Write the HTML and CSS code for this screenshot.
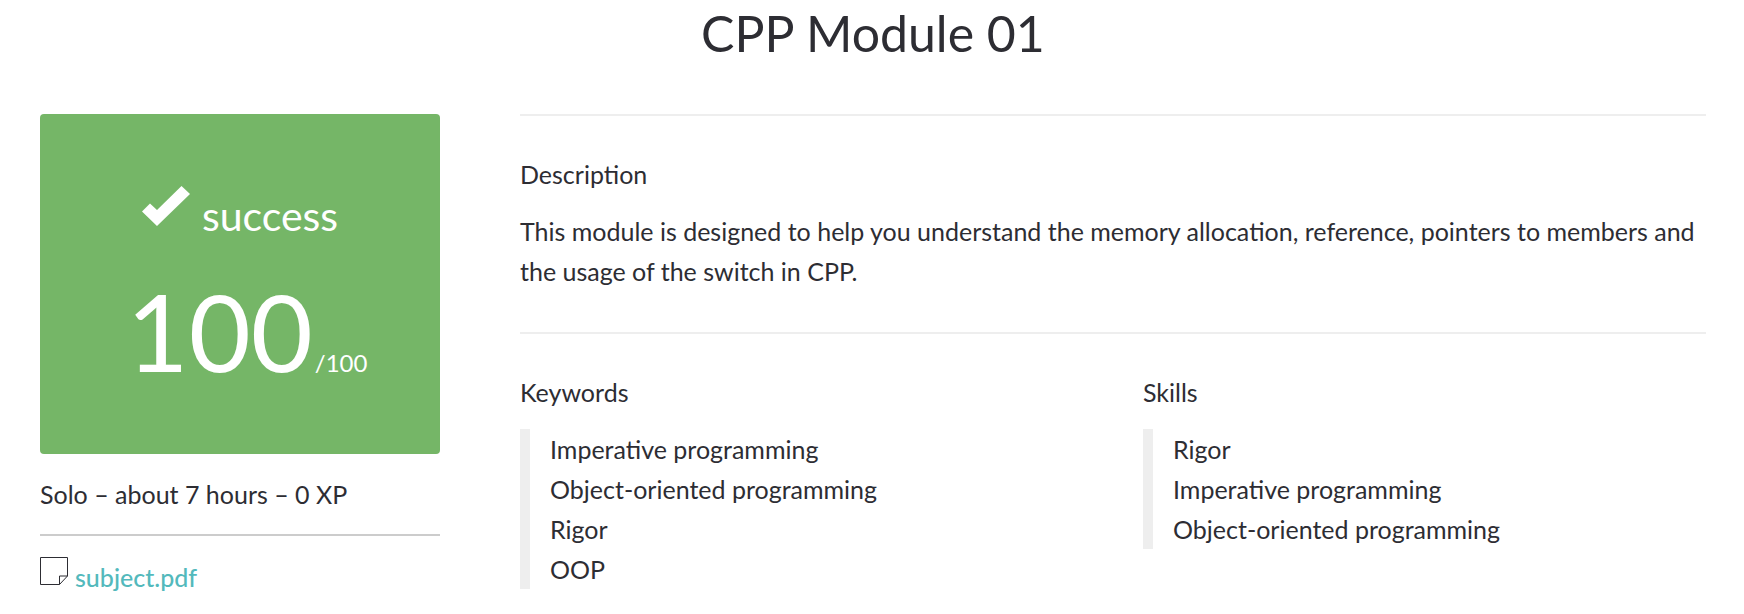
FILE: index.html
```html
<!DOCTYPE html>
<html lang="en">
<head>
<meta charset="utf-8">
<title>CPP Module 01</title>
<link rel="stylesheet" href="styles.css">
</head>
<body>
<main class="project">
  <h1 class="project-title">CPP Module 01</h1>
  <div class="project-body">
    <aside class="sidebar">
      <div class="score-card">
        <p class="status">
          <svg class="status-icon" viewBox="0 0 48 40" aria-hidden="true"><path d="M0 25.500 8 17.500 15 24 39.500 0 48 8 15 40Z"/></svg>
          <span>success</span>
        </p>
        <p class="score">100<span class="score-max">/100</span></p>
      </div>
      <p class="meta">Solo – about 7 hours – 0 XP</p>
      <div class="attachment">
        <svg class="file-icon" viewBox="0 0 28 28" aria-hidden="true"><path d="M.5.5h27v18.500l-8 8.500H.5ZM19.500 27.500v-8.500h8"/></svg>
        <a class="file-link" href="#">subject.pdf</a>
      </div>
    </aside>
    <div class="details">
      <section class="section">
        <h2 class="section-title">Description</h2>
        <p class="text">This module is designed to help you understand the memory allocation, reference, pointers to members and the usage of the switch in CPP.</p>
      </section>
      <div class="section columns">
        <section>
          <h2 class="section-title">Keywords</h2>
          <ul class="tags">
            <li>Imperative programming</li>
            <li>Object-oriented programming</li>
            <li>Rigor</li>
            <li>OOP</li>
          </ul>
        </section>
        <section>
          <h2 class="section-title">Skills</h2>
          <ul class="tags">
            <li>Rigor</li>
            <li>Imperative programming</li>
            <li>Object-oriented programming</li>
          </ul>
        </section>
      </div>
    </div>
  </div>
</main>
</body>
</html>
```
FILE: styles.css
```css
* {
  box-sizing: border-box;
}

body,
h1,
h2,
p,
ul {
  margin: 0;
  padding: 0;
}

body {
  background: #fff;
  color: #2d2d33;
  font-family: "Futura PT", Lato, sans-serif;
  font-size: 25px;
  line-height: 40px;
}

.project {
  padding: 0 38px 16px 40px;
}

.project-title {
  margin-bottom: 48px;
  font-size: 50px;
  font-weight: 400;
  line-height: 66px;
  text-align: center;
}

.project-body {
  display: grid;
  grid-template-columns: 400px minmax(0, 1fr);
  gap: 80px;
  align-items: start;
}

.score-card {
  display: flex;
  flex-direction: column;
  align-items: center;
  padding: 72px 20px 58px;
  border-radius: 4px;
  background: #75b667;
  color: #fff;
}

.status {
  display: flex;
  align-items: flex-start;
  gap: 12px;
  margin-bottom: 20px;
  font-size: 41px;
  line-height: 60px;
}

.status-icon {
  width: 48px;
  height: 40px;
  fill: currentColor;
}

.score {
  display: flex;
  align-items: baseline;
  gap: 2px;
  padding-left: 14px;
  font-size: 107px;
  line-height: 130px;
}

.score-max {
  font-size: 24px;
  line-height: 40px;
}

.meta {
  padding: 20px 0;
  border-bottom: 2px solid #ccc;
}

.attachment {
  display: flex;
  align-items: flex-start;
  gap: 7px;
  padding-top: 21px;
}

.file-icon {
  width: 28px;
  height: 28px;
  fill: none;
  stroke: #2d2d33;
}

.file-link {
  color: #53b9bc;
  font-weight: 500;
  text-decoration: none;
}

.section {
  padding: 38px 0 41px;
  border-top: 2px solid #eee;
}

.columns {
  display: grid;
  grid-template-columns: 1fr 1fr;
  gap: 60px;
  padding-bottom: 0;
}

.section-title {
  margin-bottom: 17px;
  font-size: 25px;
  font-weight: 400;
}

.tags {
  padding-left: 20px;
  border-left: 10px solid #eee;
  list-style: none;
}
```
